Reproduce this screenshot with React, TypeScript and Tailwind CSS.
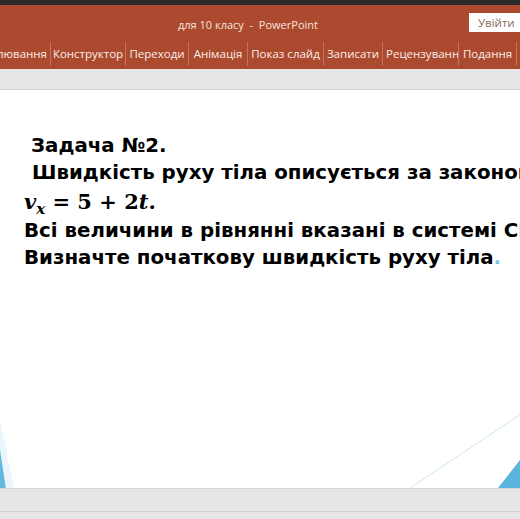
import React from "react";

const tabs = [
  { label: "лювання", w: 51, cls: "justify-end pr-[3px]" },
  { label: "Конструктор", w: 75, cls: "justify-center overflow-hidden" },
  { label: "Переходи", w: 63, cls: "justify-center overflow-hidden" },
  { label: "Анімація", w: 59, cls: "justify-center overflow-hidden" },
  { label: "Показ слайд", w: 76, cls: "justify-center overflow-hidden" },
  { label: "Записати", w: 59, cls: "justify-center overflow-hidden" },
  { label: "Рецензуванн", w: 76, cls: "justify-start pl-[3px] overflow-hidden" },
  { label: "Подання", w: 58, cls: "justify-center overflow-hidden" },
];

export default function App() {
  return (
    <div className="w-[520px] h-[519px] overflow-hidden flex flex-col bg-white" style={{ fontFamily: '"Open Sans", "Noto Sans", sans-serif' }}>
      <div className="h-[5px] bg-[#2b2b2b] shrink-0" />
      <div className="h-[64px] bg-[#ab4a2f] shrink-0 flex flex-col">
        <div className="h-[37px] flex items-start">
          <div className="pl-[178px] pt-[11px] text-[11px] leading-[17px] text-[#f6e4de] whitespace-pre">для 10 класу  -  PowerPoint</div>
          <div className="ml-auto mt-[8px] w-[51px] h-[19px] bg-white text-[11.5px] leading-[19px] text-[#8a6a60] pl-[9px] whitespace-nowrap">Увійти</div>
        </div>
        <div className="flex h-[24px] items-stretch">
          {tabs.map((t, i) => (
            <div
              key={i}
              className={"shrink-0 border-r border-[#c8735a] text-[11.5px] leading-[24px] text-[#fbeee9] whitespace-nowrap flex " + t.cls}
              style={{ width: t.w }}
            >
              {t.label}
            </div>
          ))}
        </div>
      </div>
      <div className="h-[21px] bg-[#e6e6e6] border-b border-[#d2d2d2] shrink-0" />
      <div className="relative flex-1 bg-white overflow-hidden">
        <svg className="absolute inset-0" width="520" height="398" viewBox="0 0 520 398">
          <polygon points="0,355 6,398 0,398" fill="#62b9de" />
          <polygon points="0,330 14,398 6,398 0,360" fill="#eaf6fb" />
          <line x1="410" y1="398" x2="520" y2="325" stroke="#cfe9ec" strokeWidth="1" />
          <polygon points="498,398 520,370 520,398" fill="#5ab4dc" />
        </svg>
        <div className="relative pt-[42px] pl-[24px] text-[19.8px] font-bold text-black whitespace-nowrap" style={{ fontFamily: '"DejaVu Sans", sans-serif' }}>
          <div className="h-[27px] leading-[27px] pl-[7px]">Задача №2.</div>
          <div className="h-[28px] leading-[28px] pl-[8px]">Швидкість руху тіла описується за законом</div>
          <div className="h-[30px] leading-[30px]" style={{ fontFamily: '"DejaVu Serif", serif' }}>
            <span className="italic text-[21px]">v</span>
            <span className="italic text-[15px] relative top-[5px]">x</span>
            <span className="text-[21px]"> = 5 + 2</span>
            <span className="italic text-[21px]">t</span>
            <span className="text-[21px]">.</span>
          </div>
          <div className="h-[27px] leading-[27px]">Всі величини в рівнянні вказані в системі СІ</div>
          <div className="h-[28px] leading-[28px]">
            Визначте початкову швидкість руху тіла<span className="text-[#7cc4e2]">.</span>
          </div>
        </div>
      </div>
      <div className="h-[31px] bg-[#e6e6e6] border-t border-[#d6d6d6] shrink-0 flex flex-col">
        <div className="h-[22px]" />
        <div className="h-[1px] bg-[#d2d2d2]" />
      </div>
    </div>
  );
}
